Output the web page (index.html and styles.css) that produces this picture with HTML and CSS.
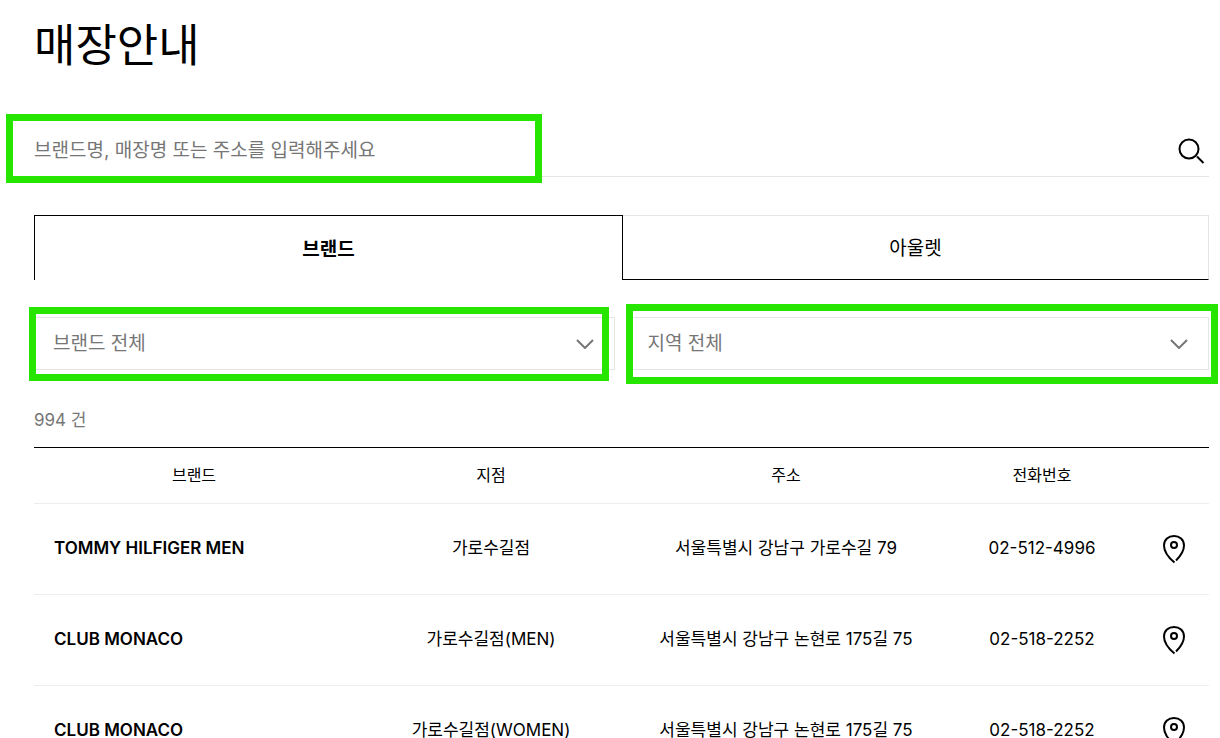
FILE: index.html
```html
<!DOCTYPE html>
<html lang="ko">
<head>
    <meta charset="UTF-8">
    <meta name="viewport" content="width=device-width, initial-scale=1.0">
    <title>매장안내</title>
    <link rel="stylesheet" href="styles.css">
</head>
<body>
    <main class="store">
        <h1 class="title">매장안내</h1>

        <form class="search">
            <input type="text" class="search-input" aria-label="매장 검색" placeholder="브랜드명, 매장명 또는 주소를 입력해주세요">
            <button type="submit" class="search-button" aria-label="검색">
                <svg width="28" height="28" viewBox="0 0 28 28" fill="none" stroke="#000" stroke-width="2">
                    <circle cx="12" cy="12" r="9.5"/>
                    <path d="M20 19.5L26.5 26"/>
                </svg>
            </button>
            <span class="mark mark-search"></span>
        </form>

        <div class="tabs">
            <button type="button" class="tab active">브랜드</button>
            <button type="button" class="tab">아울렛</button>
        </div>

        <div class="filters">
            <div class="filter">
                <select class="filter-select" aria-label="브랜드">
                    <option>브랜드 전체</option>
                </select>
                <svg class="arrow" width="18" height="10" viewBox="0 0 18 10" fill="none" stroke="#767676" stroke-width="2"><path d="M1 1L9 9L17 1"/></svg>
                <span class="mark mark-brand"></span>
            </div>
            <div class="filter">
                <select class="filter-select" aria-label="지역">
                    <option>지역 전체</option>
                </select>
                <svg class="arrow" width="18" height="10" viewBox="0 0 18 10" fill="none" stroke="#767676" stroke-width="2"><path d="M1 1L9 9L17 1"/></svg>
                <span class="mark mark-area"></span>
            </div>
        </div>

        <p class="count">994 건</p>

        <table class="list">
            <colgroup>
                <col class="col-brand">
                <col class="col-shop">
                <col class="col-address">
                <col class="col-phone">
                <col class="col-map">
            </colgroup>
            <thead>
                <tr>
                    <th>브랜드</th>
                    <th>지점</th>
                    <th>주소</th>
                    <th>전화번호</th>
                    <th></th>
                </tr>
            </thead>
            <tbody>
                <tr>
                    <td class="brand">TOMMY HILFIGER MEN</td>
                    <td>가로수길점</td>
                    <td>서울특별시 강남구 가로수길 79</td>
                    <td>02-512-4996</td>
                    <td class="map">
                        <button type="button" class="pin" aria-label="지도 보기">
                            <svg width="24" height="30" viewBox="0 0 24 30" fill="none" stroke="#000" stroke-width="2"><path d="M12.5 28.5C7 24 2 17.5 2 11.5C2 5.5 6.5 2 12 2C17.5 2 22 5.5 22 11.5C22 16.5 18.5 22 14 26.5"/><circle cx="12" cy="11" r="3"/></svg>
                        </button>
                    </td>
                </tr>
                <tr>
                    <td class="brand">CLUB MONACO</td>
                    <td>가로수길점(MEN)</td>
                    <td>서울특별시 강남구 논현로 175길 75</td>
                    <td>02-518-2252</td>
                    <td class="map">
                        <button type="button" class="pin" aria-label="지도 보기">
                            <svg width="24" height="30" viewBox="0 0 24 30" fill="none" stroke="#000" stroke-width="2"><path d="M12.5 28.5C7 24 2 17.5 2 11.5C2 5.5 6.5 2 12 2C17.5 2 22 5.5 22 11.5C22 16.5 18.5 22 14 26.5"/><circle cx="12" cy="11" r="3"/></svg>
                        </button>
                    </td>
                </tr>
                <tr>
                    <td class="brand">CLUB MONACO</td>
                    <td>가로수길점(WOMEN)</td>
                    <td>서울특별시 강남구 논현로 175길 75</td>
                    <td>02-518-2252</td>
                    <td class="map">
                        <button type="button" class="pin" aria-label="지도 보기">
                            <svg width="24" height="30" viewBox="0 0 24 30" fill="none" stroke="#000" stroke-width="2"><path d="M12.5 28.5C7 24 2 17.5 2 11.5C2 5.5 6.5 2 12 2C17.5 2 22 5.5 22 11.5C22 16.5 18.5 22 14 26.5"/><circle cx="12" cy="11" r="3"/></svg>
                        </button>
                    </td>
                </tr>
            </tbody>
        </table>
    </main>
</body>
</html>
```

FILE: styles.css
```css
* {
    box-sizing: border-box;
}

html {
    overflow-x: hidden;
    scrollbar-width: none;
}

body {
    margin: 0;
    background-color: #fff;
    color: #000;
    font-family: Inter, "Noto Sans CJK KR", sans-serif;
    font-size: 16px;
}

button,
input,
select {
    font-family: inherit;
    color: inherit;
    background: none;
    border: none;
    border-radius: 0;
    margin: 0;
    padding: 0;
}

button {
    cursor: pointer;
}

svg {
    display: block;
}

.store {
    padding: 12px 11px 0 34px;
}

.title {
    margin: 0;
    font-size: 45px;
    font-weight: 400;
    line-height: 68px;
}

/* search */
.search {
    position: relative;
    display: flex;
    align-items: center;
    height: 57px;
    margin-top: 40px;
    padding: 5px 4px 0 0;
    border-bottom: 1px solid #e5e5e5;
}

.search-input {
    flex: 1;
    height: 50px;
    font-size: 19px;
    outline: none;
}

.search-input::placeholder {
    color: #767676;
    opacity: 1;
}

/* tabs */
.tabs {
    display: flex;
    margin-top: 38px;
}

.tab {
    flex: 1 1 0;
    height: 65px;
    padding-bottom: 2px;
    font-size: 19px;
    border: 1px solid #e5e5e5;
    border-left: none;
    border-bottom-color: #000;
}

.tab.active {
    flex-basis: 4px;
    font-weight: 700;
    border: 1px solid #000;
    border-bottom: none;
}

/* filters */
.filters {
    display: flex;
    gap: 14px;
    margin-top: 37px;
}

.filter {
    position: relative;
    flex: 1;
}

.filter-select {
    display: block;
    width: 100%;
    height: 53px;
    padding: 0 18px;
    color: #767676;
    font-size: 19px;
    border: 1px solid #e5e5e5;
    appearance: none;
}

.arrow {
    position: absolute;
    top: 22px;
    right: 21px;
    pointer-events: none;
}

/* green highlight boxes */
.mark {
    position: absolute;
    border: 7px solid #26e600;
    pointer-events: none;
}

.mark-search {
    top: -6px;
    bottom: -7px;
    left: -28px;
    width: 536px;
}

.mark-brand {
    top: -10px;
    bottom: -11px;
    left: -5px;
    right: 6px;
}

.mark-area {
    top: -13px;
    bottom: -14px;
    left: -3px;
    right: -9px;
}

/* list */
.count {
    margin: 38px 0 14px;
    color: #767676;
    font-size: 17px;
    line-height: 25px;
}

.list {
    width: 100%;
    table-layout: fixed;
    border-collapse: separate;
    border-spacing: 0;
    border-top: 1px solid #000;
    line-height: 24px;
    text-align: center;
}

.list th {
    height: 56px;
    padding: 0 0 2px;
    font-weight: 400;
    border-bottom: 1px solid #eee;
}

.list td {
    height: 91px;
    padding: 0 0 2px;
    font-size: 17px;
    border-bottom: 1px solid #eee;
}

.list .brand {
    padding-left: 20px;
    font-weight: 600;
    text-align: left;
}

.list .map {
    padding: 0 2px 0 0;
}

.col-brand {
    width: 320px;
}

.col-shop {
    width: 274px;
}

.col-address {
    width: 316px;
}

.col-phone {
    width: 196px;
}

.col-map {
    width: 69px;
}

.pin {
    display: inline-block;
    vertical-align: middle;
}
```
